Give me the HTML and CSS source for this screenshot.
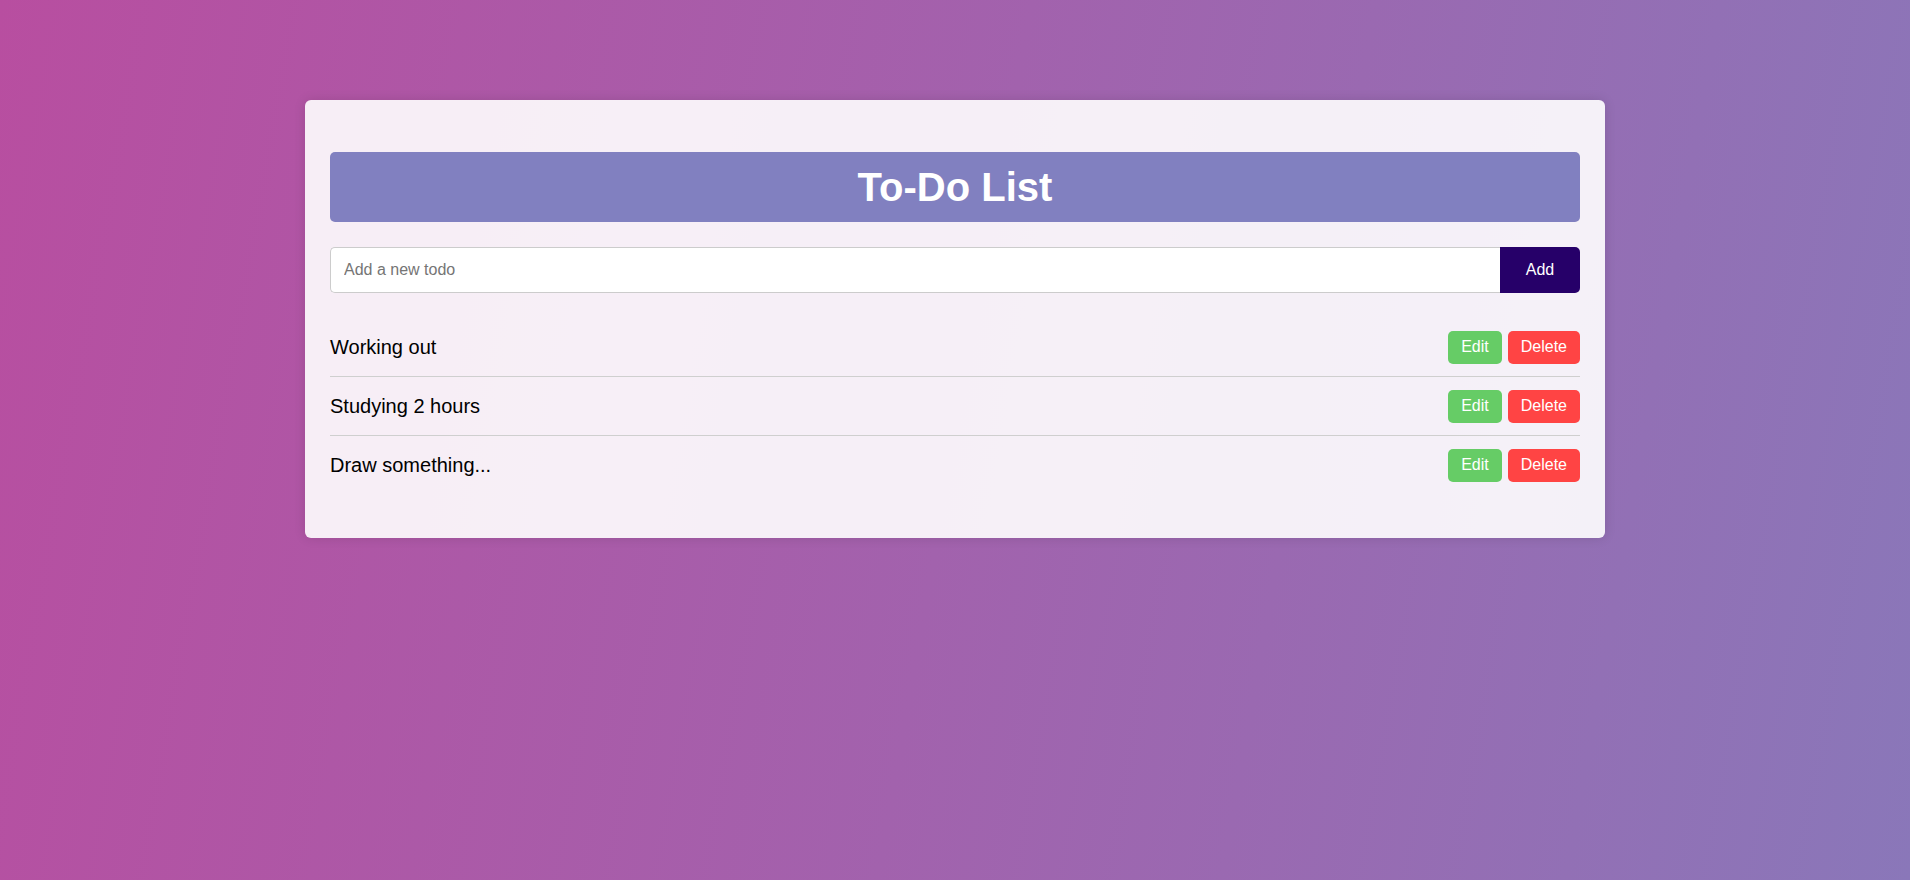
FILE: index.html
```html
<!DOCTYPE html>
<html lang="en">
<head>
<meta charset="utf-8">
<title>To-Do List</title>
<link rel="stylesheet" href="styles.css">
</head>
<body>
  <main class="card">
    <h1 class="title">To-Do List</h1>
    <form class="add-form">
      <input class="add-input" type="text" placeholder="Add a new todo">
      <button class="add-btn" type="button">Add</button>
    </form>
    <ul class="todo-list">
      <li class="todo-item">
        <span class="todo-text">Working out</span>
        <div class="todo-actions">
          <button class="btn btn-edit" type="button">Edit</button>
          <button class="btn btn-delete" type="button">Delete</button>
        </div>
      </li>
      <li class="todo-item">
        <span class="todo-text">Studying 2 hours</span>
        <div class="todo-actions">
          <button class="btn btn-edit" type="button">Edit</button>
          <button class="btn btn-delete" type="button">Delete</button>
        </div>
      </li>
      <li class="todo-item">
        <span class="todo-text">Draw something...</span>
        <div class="todo-actions">
          <button class="btn btn-edit" type="button">Edit</button>
          <button class="btn btn-delete" type="button">Delete</button>
        </div>
      </li>
    </ul>
  </main>
</body>
</html>
```

FILE: styles.css
```css
* {
  box-sizing: border-box;
}

html, body {
  height: 100%;
}

body {
  margin: 0;
  padding-top: 100px;
  font-family: "Liberation Sans", Arial, sans-serif;
  background: linear-gradient(100deg, #b84ea0 0%, #a262ad 50%, #8a77b9 100%);
  min-height: 880px;
}

.card {
  width: 1300px;
  margin: 0 auto;
  padding: 25px;
  background: rgba(255, 255, 255, 0.9);
  border-radius: 6px;
  box-shadow: 0 0 12px rgba(0, 0, 0, 0.12);
}

.title {
  margin: 27px 0 25px;
  height: 70px;
  display: flex;
  align-items: center;
  justify-content: center;
  background: #8180c0;
  color: #fff;
  font-size: 40px;
  font-weight: bold;
  border-radius: 5px;
}

.add-form {
  display: flex;
  height: 46px;
  margin: 0;
}

.add-input {
  flex: 1;
  height: 100%;
  padding: 0 13px;
  border: 1px solid #cccccc;
  border-right: none;
  border-radius: 5px 0 0 5px;
  font-family: "Liberation Sans", Arial, sans-serif;
  font-size: 16px;
  color: #222;
  background: #fff;
  outline: none;
}

.add-input::placeholder {
  color: #757575;
}

.add-btn {
  width: 80px;
  height: 100%;
  border: none;
  border-radius: 0 5px 5px 0;
  background: #260069;
  color: #fff;
  font-family: "Liberation Sans", Arial, sans-serif;
  font-size: 16px;
}

.todo-list {
  list-style: none;
  margin: 25px 0 19px;
  padding: 0;
}

.todo-item {
  display: flex;
  align-items: center;
  justify-content: space-between;
  padding: 12.5px 0;
  border-bottom: 1px solid #cfcfcf;
}

.todo-item:last-child {
  border-bottom: none;
}

.todo-text {
  font-size: 20px;
  color: #000;
}

.todo-actions {
  display: flex;
  gap: 6px;
}

.btn {
  height: 33px;
  padding: 0 13px;
  border: none;
  border-radius: 5px;
  color: #fff;
  font-family: "Liberation Sans", Arial, sans-serif;
  font-size: 16px;
}

.btn-edit {
  background: #66cc66;
}

.btn-delete {
  background: #ff4444;
}
```
